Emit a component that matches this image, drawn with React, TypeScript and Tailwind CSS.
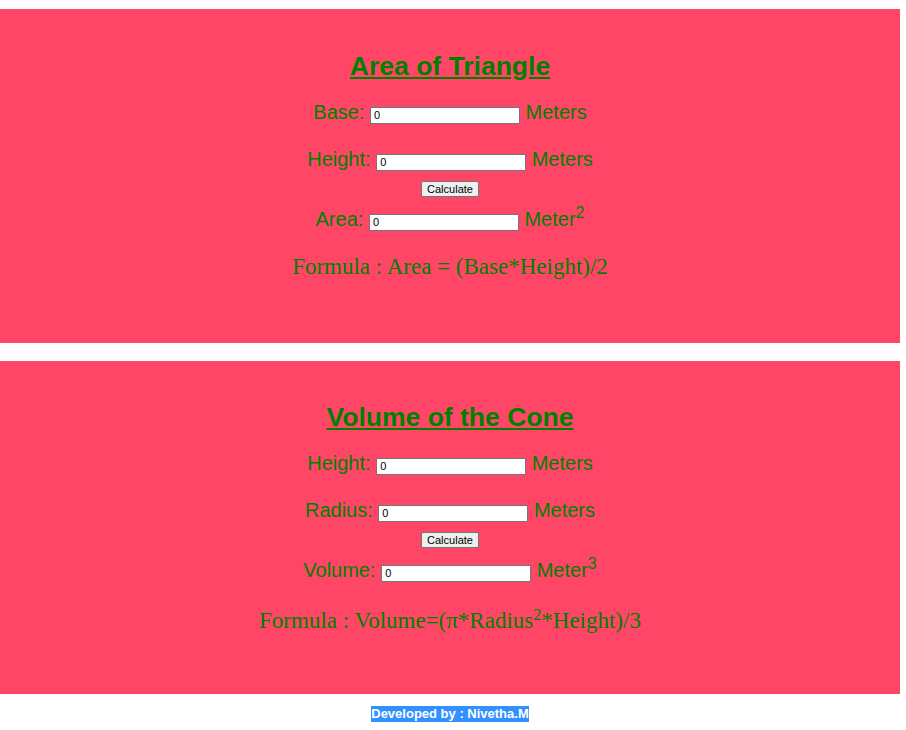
const sans = "font-['Liberation_Sans',Arial,sans-serif]";
const serif = "font-['Liberation_Serif','Times_New_Roman',serif]";

function NumInput({ w = "w-[150px]" }: { w?: string }) {
  return (
    <input
      type="text"
      defaultValue="0"
      className={`${w} h-[17px] bg-white border border-[#767676] px-[3px] text-[11px] text-black align-baseline ${sans}`}
    />
  );
}

function CalcButton() {
  return (
    <div className="flex justify-center h-[36px] items-start pt-[10px]">
      <button
        className={`h-[16px] px-[5px] bg-[#efefef] border border-[#767676] rounded-[2px] text-[11px] leading-none text-black ${sans}`}
      >
        Calculate
      </button>
    </div>
  );
}

function Row({ label, unit, sup }: { label: string; unit: string; sup?: string }) {
  return (
    <p className={`text-center text-[20px] leading-[24px] text-[#008000] ${sans}`}>
      {label}: <NumInput /> {unit}
      {sup && <sup className="text-[16px]">{sup}</sup>}
    </p>
  );
}

export default function App() {
  return (
    <div className="w-[906px] bg-white">
      <div className="w-[900px] pt-[9px] flex flex-col gap-[18px]">
        {/* Area of Triangle */}
        <section className="h-[334px] bg-[#ff4667] pt-[42px]">
          <h1
            className={`text-center text-[26.5px] leading-[30px] font-bold underline text-[#008000] ${sans}`}
          >
            Area of Triangle
          </h1>
          <div className="mt-[19px] flex flex-col">
            <Row label="Base" unit="Meters" />
            <div className="mt-[23px]">
              <Row label="Height" unit="Meters" />
            </div>
            <CalcButton />
            <Row label="Area" unit="Meter" sup="2" />
            <p className={`mt-[23px] text-center text-[23px] leading-[26px] text-[#008000] ${serif}`}>
              Formula : Area = (Base*Height)/2
            </p>
          </div>
        </section>

        {/* Volume of the Cone */}
        <section className="h-[333px] bg-[#ff4667] pt-[41px]">
          <h1
            className={`text-center text-[26.5px] leading-[30px] font-bold underline text-[#008000] ${sans}`}
          >
            Volume of the Cone
          </h1>
          <div className="mt-[19px] flex flex-col">
            <Row label="Height" unit="Meters" />
            <div className="mt-[23px]">
              <Row label="Radius" unit="Meters" />
            </div>
            <CalcButton />
            <Row label="Volume" unit="Meter" sup="3" />
            <p className={`mt-[26px] text-center text-[23px] leading-[26px] text-[#008000] ${serif}`}>
              Formula : Volume=(π*Radius<sup className="text-[16px]">2</sup>*Height)/3
            </p>
          </div>
        </section>
      </div>

      <div className="w-[900px] pt-[12px] pb-[8px] flex justify-center">
        <span
          className={`bg-[#3390ff] text-white text-[13px] leading-[16px] h-[16px] font-bold ${sans}`}
        >
          Developed by : Nivetha.M
        </span>
      </div>
    </div>
  );
}
